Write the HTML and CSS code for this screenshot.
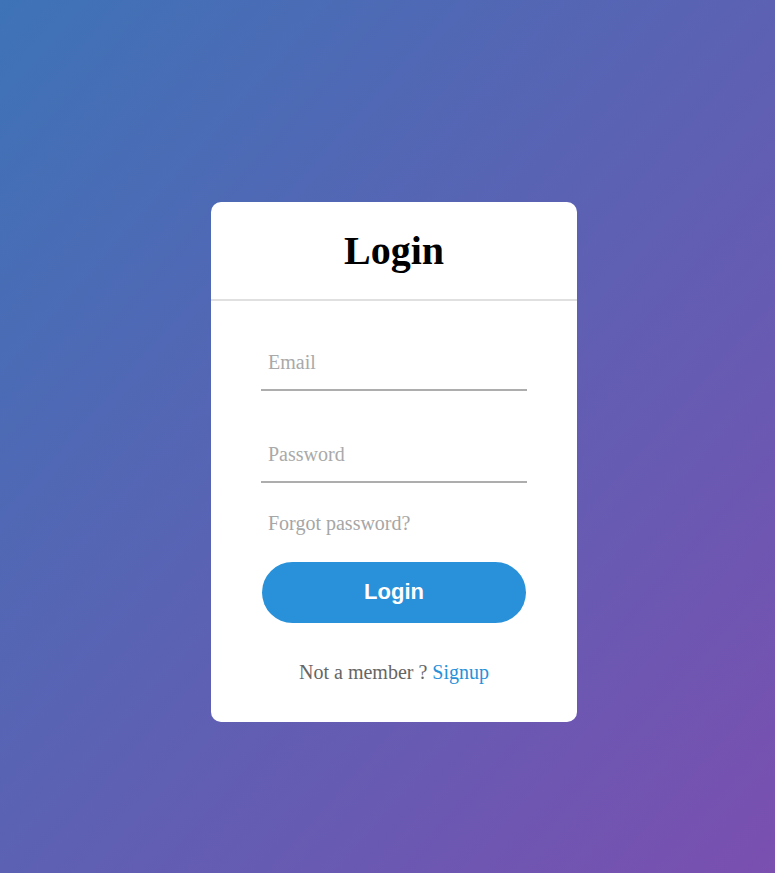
FILE: index.html
```html
<!DOCTYPE html>
<html>
<head>
<meta charset="utf-8">
<link rel="stylesheet" href="styles.css">
</head>
<body>
<div class="page">
  <div class="card">
    <h1 class="title">Login</h1>
    <form class="form">
      <div class="field"><input type="text" placeholder="Email"></div>
      <div class="field field-last"><input type="password" placeholder="Password"></div>
      <div class="forgot">Forgot password?</div>
      <button type="button" class="btn">Login</button>
      <div class="signup">Not a member ? <a href="#">Signup</a></div>
    </form>
  </div>
</div>
</body>
</html>
```
FILE: styles.css
```css
html, body {
  margin: 0;
  padding: 0;
  height: 100%;
}
body {
  background: linear-gradient(to bottom right, #3e73b7, #7a4fb0);
  font-family: "Liberation Serif", serif;
}
.page {
  height: 873px;
  display: flex;
  justify-content: center;
  align-items: flex-start;
  padding-top: 202px;
  box-sizing: border-box;
}
.card {
  width: 366px;
  background: #fff;
  border-radius: 10px;
  margin-left: 13px;
}
.title {
  margin: 0;
  text-align: center;
  font-size: 40px;
  font-weight: bold;
  line-height: 46px;
  padding: 26px 0 25px;
  border-bottom: 2px solid #e0e0e0;
  color: #000;
}
.form {
  padding: 36px 50px 38px;
  display: flex;
  flex-direction: column;
}
.field {
  margin-bottom: 38px;
}
.field-last {
  margin-bottom: 29px;
}
.field input {
  display: block;
  width: 100%;
  box-sizing: border-box;
  height: 54px;
  padding: 0 7px 2px;
  border: none;
  border-bottom: 2px solid #adadad;
  outline: none;
  font-family: "Liberation Serif", serif;
  font-size: 20px;
  color: #333;
  background: transparent;
}
.field input::placeholder {
  color: #a9a9a9;
}
.forgot {
  padding-left: 7px;
  font-size: 20px;
  line-height: 23px;
  color: #a6a6a6;
}
.btn {
  margin: 27px 1px 0;
  height: 61px;
  border: none;
  border-radius: 31px;
  background: #2891d9;
  color: #fff;
  font-family: "Liberation Sans", Arial, sans-serif;
  font-weight: bold;
  font-size: 22px;
  padding-bottom: 2px;
}
.signup {
  margin-top: 38px;
  text-align: center;
  font-size: 20px;
  line-height: 23px;
  color: #666;
}
.signup a {
  color: #2691d9;
  text-decoration: none;
}
```
